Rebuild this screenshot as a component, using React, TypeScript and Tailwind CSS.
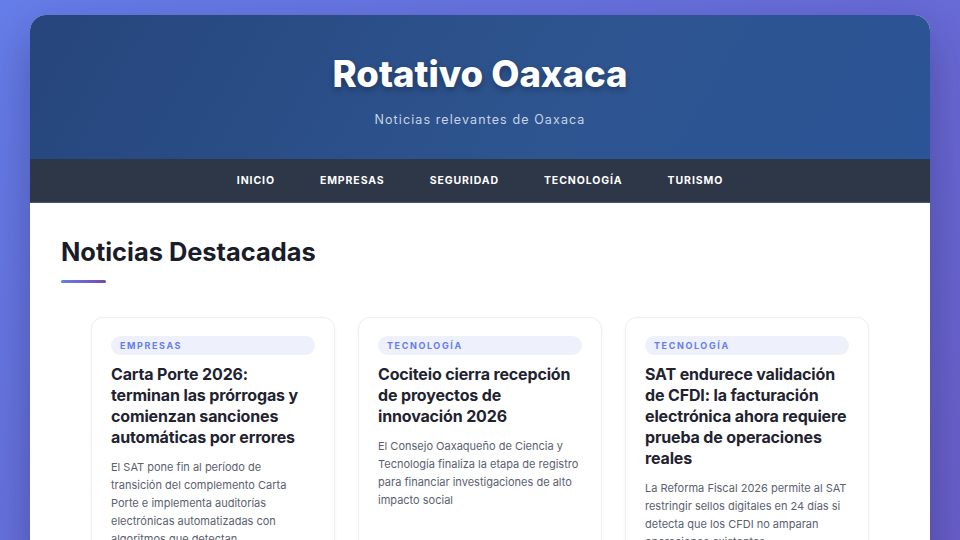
const font = { fontFamily: "Inter, 'Noto Sans', sans-serif" };

interface Noticia {
  categoria: string;
  titulo: string;
  resumen: string;
}

const navItems = ["Inicio", "Empresas", "Seguridad", "Tecnología", "Turismo"];

const noticias: Noticia[] = [
  {
    categoria: "Empresas",
    titulo: "Carta Porte 2026: terminan las prórrogas y comienzan sanciones automáticas por errores",
    resumen:
      "El SAT pone fin al período de transición del complemento Carta Porte e implementa auditorías electrónicas automatizadas con algoritmos que detectan inconsistencias en tiempo real",
  },
  {
    categoria: "Tecnología",
    titulo: "Cociteio cierra recepción de proyectos de innovación 2026",
    resumen:
      "El Consejo Oaxaqueño de Ciencia y Tecnología finaliza la etapa de registro para financiar investigaciones de alto impacto social",
  },
  {
    categoria: "Tecnología",
    titulo: "SAT endurece validación de CFDI: la facturación electrónica ahora requiere prueba de operaciones reales",
    resumen:
      "La Reforma Fiscal 2026 permite al SAT restringir sellos digitales en 24 días si detecta que los CFDI no amparan operaciones existentes",
  },
];

function NewsCard({ n }: { n: Noticia }) {
  return (
    <article className="bg-white border border-[#eceff3] rounded-xl px-[19px] pt-[18px] pb-6 shadow-[0_2px_6px_rgba(0,0,0,0.03)]">
      <div className="h-[19px] rounded-full bg-[#eef0fb] px-[9px] flex items-center">
        <span className="text-[9px] font-bold uppercase tracking-[1.6px] text-[#667eea]">{n.categoria}</span>
      </div>
      <h3 className="mt-[9px] text-[16px] leading-[21px] font-bold tracking-[-0.15px] text-[#1f2330]">{n.titulo}</h3>
      <p className="mt-[10px] text-[11px] leading-[18px] text-[#5a6170]">{n.resumen}</p>
    </article>
  );
}

export default function App() {
  return (
    <div className="min-h-screen h-[540px] overflow-hidden bg-[linear-gradient(135deg,#667eea_0%,#6a5fcb_100%)] pt-[15px]" style={font}>
      <div className="mx-auto w-[900px] rounded-t-2xl overflow-hidden bg-white shadow-[0_20px_50px_rgba(20,20,60,0.35)]">
        {/* Header */}
        <header className="h-[144px] bg-[linear-gradient(120deg,#26457c_0%,#2e5590_60%,#2b5496_100%)] flex flex-col items-center pt-[37px]">
          <h1 className="text-[36.5px] leading-[44px] font-extrabold text-white [text-shadow:0_3px_6px_rgba(0,0,0,0.3)]">
            Rotativo Oaxaca
          </h1>
          <p className="mt-[14px] text-[12.5px] leading-5 tracking-[1.1px] text-[#c9d3e6]">Noticias relevantes de Oaxaca</p>
        </header>

        {/* Nav */}
        <nav className="h-[44px] bg-[#2d3748] flex items-center justify-center gap-[45px] border-b border-[#4a5568]">
          {navItems.map((item) => (
            <span key={item} className="text-[10.5px] font-bold uppercase tracking-[0.9px] text-white">
              {item}
            </span>
          ))}
        </nav>

        {/* Main */}
        <main className="px-[31px] pt-[33px] pb-10">
          <h2 className="text-[25.4px] leading-8 font-bold text-[#1a1d29]">Noticias Destacadas</h2>
          <div className="mt-[12px] h-[3px] w-[45px] rounded-full bg-[linear-gradient(90deg,#667eea,#764ba2)]" />
          <div className="mt-[34px] mx-auto w-[778px] grid grid-cols-3 gap-[23px]">
            {noticias.map((n) => (
              <NewsCard key={n.titulo} n={n} />
            ))}
          </div>
        </main>
      </div>
    </div>
  );
}
